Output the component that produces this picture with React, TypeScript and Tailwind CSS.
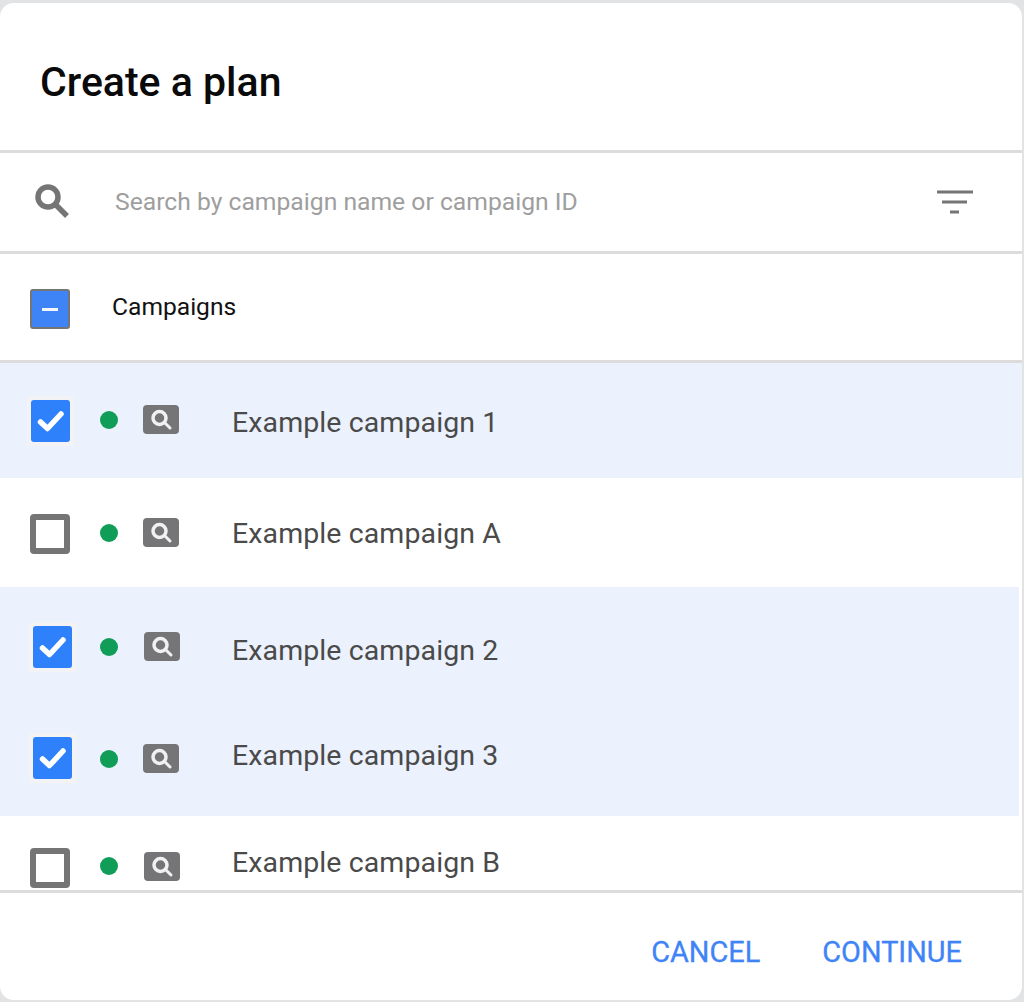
import React from 'react'

const FONT = "font-['Roboto',sans-serif]"

function Check({ className }: { className: string }) {
  return (
    <div className={`rounded-[3px] bg-[#f3f3f6] p-[4px] ${className}`}>
      <div className="flex h-[42px] w-[39px] items-center justify-center rounded-[3px] bg-[#2f80fb]">
        <svg width="30" height="26" viewBox="0 0 30 26" fill="none">
          <path d="M4.5 14 L11.5 20.5 L25 6" stroke="white" strokeWidth="5.5" strokeLinecap="round" strokeLinejoin="round" />
        </svg>
      </div>
    </div>
  )
}

function Unchecked({ className }: { className: string }) {
  return <div className={`h-[40px] w-[40px] rounded-[4px] border-[6px] border-[#757575] bg-white ${className}`} />
}

function SearchBadge({ className }: { className: string }) {
  return (
    <div className={`flex h-[29px] w-[36px] items-center justify-center rounded-[4px] bg-[#757578] ${className}`}>
      <svg width="24" height="22" viewBox="0 0 24 22" fill="none">
        <circle cx="10.5" cy="9" r="6.5" stroke="#f1f1f1" strokeWidth="3.5" />
        <path d="M15.5 13.5 L21 19" stroke="#f1f1f1" strokeWidth="3" strokeLinecap="round" />
      </svg>
    </div>
  )
}

type RowProps = {
  label: string
  height: string
  box: React.ReactNode
  dot: string
  badge: string
  text: string
  bg?: string
}

function Row({ label, height, box, dot, badge, text, bg }: RowProps) {
  return (
    <div className={`flex items-start ${height} ${bg ?? ''}`}>
      <div className="w-[100px] shrink-0">{box}</div>
      <div className={`h-[18px] w-[18px] shrink-0 rounded-full bg-[#0f9d58] ${dot}`} />
      <SearchBadge className={`shrink-0 ${badge}`} />
      <span className={`text-[28.5px] leading-[34px] tracking-[0.1px] text-[#4a4a4a] ${text}`}>{label}</span>
    </div>
  )
}

export default function App() {
  return (
    <div className={`${FONT} h-[1002px] w-[1024px] overflow-hidden bg-[#e2e3e4] pt-[3px] pr-[2px]`}>
      <div className="flex h-[997px] flex-col overflow-hidden rounded-[14px] bg-white">
        {/* Header */}
        <div className="flex h-[150px] shrink-0 items-center border-b-[3px] border-[#dcdcdc] pt-[11px] pl-[40px]">
          <h1 className="text-[41px] leading-[48px] font-medium text-[#0a0a0a]">Create a plan</h1>
        </div>

        {/* Search */}
        <div className="flex h-[101px] shrink-0 items-center border-b-[3px] border-[#dcdcdc] pr-[48px] pl-[34px]">
          <svg width="36" height="36" viewBox="0 0 36 36" fill="none">
            <circle cx="14" cy="13" r="10" stroke="#757575" strokeWidth="5.5" />
            <path d="M22 21 L33 32" stroke="#757575" strokeWidth="5.5" />
          </svg>
          <span className="ml-[45px] flex-1 text-[24.7px] leading-[30px] text-[#9e9e9e]">Search by campaign name or campaign ID</span>
          <svg width="38" height="26" viewBox="0 0 38 26" fill="none">
            <path d="M1 3 H37 M6 13 H31 M14 23 H23" stroke="#757575" strokeWidth="3" />
          </svg>
        </div>

        {/* Select all */}
        <div className="flex h-[109px] shrink-0 items-center border-b-[3px] border-[#dcdcdc] pl-[30px]">
          <div className="mt-[4px] flex h-[40px] w-[40px] items-center justify-center rounded-[3px] border-2 border-[#757575] bg-[#3f84f6]">
            <div className="h-[3px] w-[16px] bg-[#f4f6fb]" />
          </div>
          <span className="ml-[42px] text-[24.6px] leading-[30px] text-[#111111]">Campaigns</span>
        </div>

        {/* Campaign rows */}
        <div className="min-h-0 flex-1 overflow-hidden">
          <Row label="Example campaign 1" height="h-[115px]" bg="bg-[#ebf1fd]"
            box={<Check className="mt-[33px] ml-[27px] w-[47px]" />}
            dot="mt-[48px]" badge="mt-[42px] ml-[25px]" text="mt-[43px] ml-[53px]" />
          <Row label="Example campaign A" height="h-[109px]"
            box={<Unchecked className="mt-[36px] ml-[30px]" />}
            dot="mt-[46px]" badge="mt-[40px] ml-[25px]" text="mt-[39px] ml-[53px]" />
          <Row label="Example campaign 2" height="h-[115px]" bg="bg-[#ebf1fd] mr-[3px]"
            box={<Check className="mt-[35px] ml-[29px] w-[47px]" />}
            dot="mt-[51px]" badge="mt-[45px] ml-[26px]" text="mt-[47px] ml-[52px]" />
          <Row label="Example campaign 3" height="h-[114px]" bg="bg-[#ebf1fd] mr-[3px]"
            box={<Check className="mt-[31px] ml-[29px] w-[47px]" />}
            dot="mt-[48px]" badge="mt-[42px] ml-[25px]" text="mt-[37px] ml-[53px]" />
          <Row label="Example campaign B" height="h-[74px]"
            box={<Unchecked className="mt-[32px] ml-[30px]" />}
            dot="mt-[41px]" badge="mt-[36px] ml-[26px]" text="mt-[30px] ml-[52px]" />
        </div>

        {/* Footer */}
        <div className="flex h-[110px] shrink-0 items-center justify-end gap-[62px] border-t-[3px] border-[#dcdcdc] pr-[60px] pt-[10px]">
          <span className="text-[28.9px] leading-[32px] text-[#3f84f6] [-webkit-text-stroke:0.3px_#3f84f6]">CANCEL</span>
          <span className="text-[28.9px] leading-[32px] text-[#3f84f6] [-webkit-text-stroke:0.3px_#3f84f6]">CONTINUE</span>
        </div>
      </div>
    </div>
  )
}
